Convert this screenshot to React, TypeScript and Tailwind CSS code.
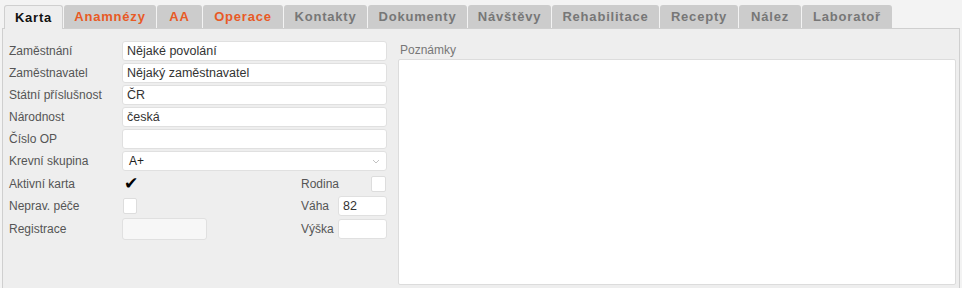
import React from 'react';

const tabs = [
  { label: 'Karta', w: 'w-[59px]', kind: 'active' },
  { label: 'Anamnézy', w: 'w-[92px]', kind: 'hot' },
  { label: 'AA', w: 'w-[45px]', kind: 'hot' },
  { label: 'Operace', w: 'w-[80px]', kind: 'hot' },
  { label: 'Kontakty', w: 'w-[83px]', kind: 'off' },
  { label: 'Dokumenty', w: 'w-[99px]', kind: 'off' },
  { label: 'Návštěvy', w: 'w-[83px]', kind: 'off' },
  { label: 'Rehabilitace', w: 'w-[107px]', kind: 'off' },
  { label: 'Recepty', w: 'w-[78px]', kind: 'off' },
  { label: 'Nález', w: 'w-[62px]', kind: 'off' },
  { label: 'Laboratoř', w: 'w-[90px]', kind: 'off' },
];

const font = "font-['Liberation_Sans',Arial,sans-serif]";

const TextRow = ({ label, value }: { label: string; value: string }) => (
  <div className="flex h-[22px] items-center">
    <span className="w-[113px] text-[12px] text-[#555]">{label}</span>
    <div className="flex h-[20px] w-[265px] items-center rounded-[3px] border border-[#e0e0e0] bg-white px-[4px] text-[12.5px] text-[#333]">
      {value}
    </div>
  </div>
);

export default function App() {
  return (
    <div className={`h-[288px] w-[962px] overflow-hidden bg-[#f3f3f3] ${font}`}>
      {/* tab strip */}
      <div className="flex gap-[1px] pl-[4px] pt-[5px]">
        {tabs.map((t) => (
          <div
            key={t.label}
            className={
              t.kind === 'active'
                ? `relative z-10 flex h-[24px] items-center justify-center rounded-t-[3px] border border-b-0 border-[#cfcfcf] bg-[#eeeeee] text-[13px] font-bold tracking-[0.8px] text-[#111] ${t.w}`
                : `flex h-[23px] items-center justify-center rounded-t-[3px] bg-[#cccccc] text-[13px] font-bold tracking-[0.8px] ${t.kind === 'hot' ? 'text-[#e85a25]' : 'text-[#777]'} ${t.w}`
            }
          >
            {t.label}
          </div>
        ))}
      </div>

      {/* panel */}
      <div className="-mt-[1px] ml-[2px] mr-[2px] flex h-[300px] border-l border-t border-r border-[#cfcfcf] bg-[#eeeeee] pt-[11px]">
        <div className="flex w-[395px] flex-col pl-[6px]">
          <TextRow label="Zaměstnání" value="Nějaké povolání" />
          <TextRow label="Zaměstnavatel" value="Nějaký zaměstnavatel" />
          <TextRow label="Státní příslušnost" value="ČR" />
          <TextRow label="Národnost" value="česká" />
          <TextRow label="Číslo OP" value="" />
          <div className="flex h-[22px] items-center">
            <span className="w-[113px] text-[12px] text-[#555]">Krevní skupina</span>
            <div className="flex h-[20px] w-[265px] items-center justify-between rounded-[3px] border border-[#e0e0e0] bg-white pl-[6px] pr-[6px] text-[12px] text-[#222]">
              <span>A+</span>
              <svg width="8" height="5" viewBox="0 0 8 5" fill="none">
                <path d="M1 1l3 3 3-3" stroke="#bbb" strokeWidth="0.9" />
              </svg>
            </div>
          </div>

          <div className="flex h-[23px] items-center">
            <span className="w-[113px] text-[12px] text-[#555]">Aktivní karta</span>
            <div className="flex h-[17px] w-[17px] items-center justify-center text-[17px] leading-none text-black">✔</div>
            <span className="ml-[162px] w-[70px] text-[12px] text-[#555]">Rodina</span>
            <div className="h-[16px] w-[15px] rounded-[2px] border border-[#ddd] bg-white" />
          </div>
          <div className="flex h-[22px] items-center">
            <span className="w-[114px] text-[12px] text-[#555]">Neprav. péče</span>
            <div className="h-[16px] w-[14px] rounded-[2px] border border-[#ddd] bg-white" />
            <span className="ml-[164px] w-[37px] text-[12px] text-[#555]">Váha</span>
            <div className="flex h-[20px] w-[49px] items-center rounded-[3px] border border-[#e0e0e0] bg-white px-[4px] text-[12.5px] text-[#333]">82</div>
          </div>
          <div className="flex h-[23px] items-center">
            <span className="w-[113px] text-[12px] text-[#555]">Registrace</span>
            <div className="h-[22px] w-[85px] rounded-[3px] border border-[#e0e0e0] bg-[#f7f7f7]" />
            <span className="ml-[94px] w-[37px] text-[12px] text-[#555]">Výška</span>
            <div className="h-[20px] w-[49px] rounded-[3px] border border-[#e0e0e0] bg-white" />
          </div>
        </div>

        <div className="flex flex-1 flex-col pr-[3px]">
          <span className="ml-[2px] mt-[3px] text-[12px] leading-[14px] text-[#777]">Poznámky</span>
          <div className="mt-[2px] h-[226px] rounded-[2px] border border-[#dcdcdc] bg-white" />
        </div>
      </div>
    </div>
  );
}
